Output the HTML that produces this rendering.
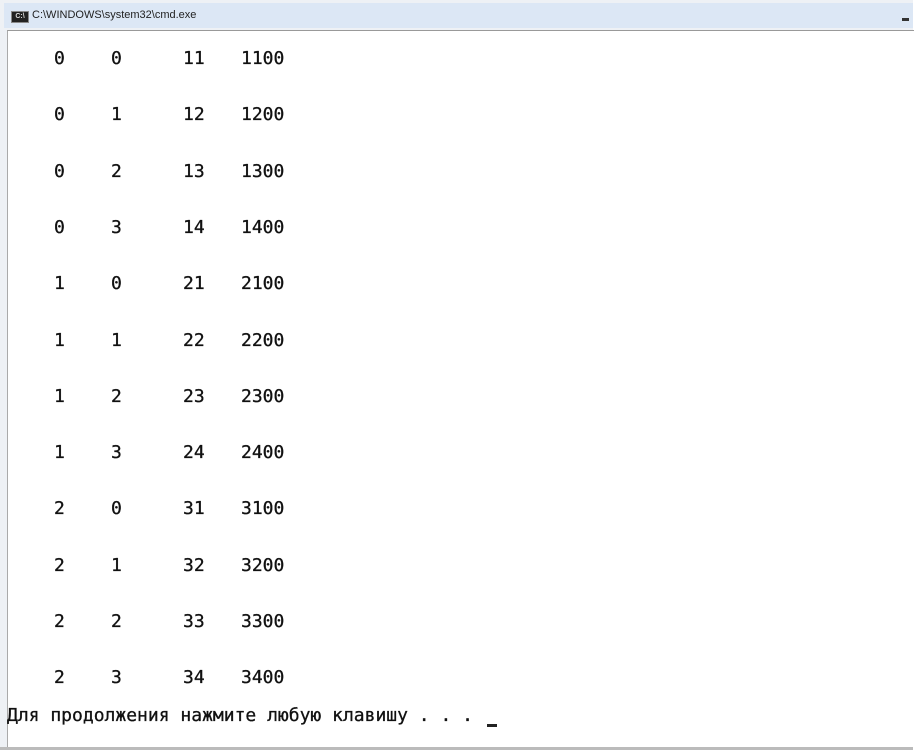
<!DOCTYPE html>
<html><head><meta charset="utf-8"><style>
html,body{margin:0;padding:0;width:921px;height:754px;overflow:hidden;background:#fff;}
.frame{position:absolute;left:0;top:0;width:913px;height:750px;background:#eef1f5;}
.tb{position:absolute;left:4px;top:3px;width:909px;height:25px;background:#dce7f5;}
.tt{position:absolute;left:32px;top:9px;font:11px "Liberation Sans",sans-serif;color:#222;}
.icon{position:absolute;left:11px;top:11px;width:16px;height:10px;background:#222;border:1px solid #888;color:#ddd;font:bold 7px "Liberation Sans",sans-serif;line-height:10px;text-align:center;}
.min{position:absolute;left:902px;top:18px;width:7px;height:3px;background:#333;}
.content{position:absolute;left:7px;top:30px;width:906px;height:717px;background:#fff;border-left:1px solid #aaa;border-top:1px solid #999;}
.bot{position:absolute;left:0;top:747px;width:913px;height:3px;background:#bbb;}
.t{position:absolute;font:18px "DejaVu Sans Mono",monospace;color:#111;line-height:20px;white-space:pre;-webkit-text-stroke:0.3px #111;}
.cur{position:absolute;left:487px;top:724px;width:10px;height:3px;background:#222;}
</style></head><body>
<div class="frame"></div>
<div class="tb"></div>
<div class="icon">C:\</div>
<div class="tt">C:\WINDOWS\system32\cmd.exe</div>
<div class="min"></div>
<div class="content"></div>
<div class="bot"></div>
<div id="rows"></div>
<div class="t" style="left:7px;top:706px;">Для продолжения нажмите любую клавишу . . . </div>
<div class="cur"></div>
<script>
var d=[[0,0,11,1100],[0,1,12,1200],[0,2,13,1300],[0,3,14,1400],[1,0,21,2100],[1,1,22,2200],[1,2,23,2300],[1,3,24,2400],[2,0,31,3100],[2,1,32,3200],[2,2,33,3300],[2,3,34,3400]];
var xs=[54,111,183,241],h='';
d.forEach(function(r,i){var y=49+i*56.3;r.forEach(function(v,j){h+='<div class="t" style="left:'+xs[j]+'px;top:'+y+'px">'+v+'</div>';});});
document.getElementById('rows').innerHTML=h;
</script>
</body></html>
